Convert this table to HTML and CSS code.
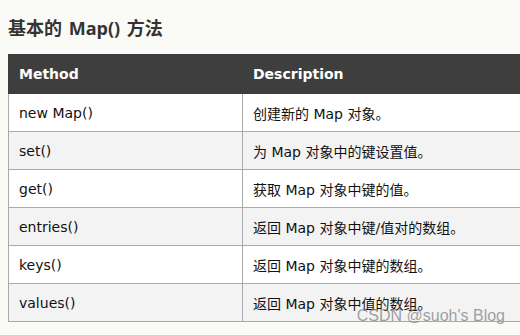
FILE: index.html
```html
<!DOCTYPE html>
<html lang="zh">
<head>
<meta charset="utf-8">
<title>基本的 Map() 方法</title>
<link rel="stylesheet" href="styles.css">
</head>
<body>
<main class="page">
  <h2 class="title">基本的 Map() 方法</h2>
  <table class="methods">
    <thead>
      <tr><th class="col-method">Method</th><th class="col-desc">Description</th></tr>
    </thead>
    <tbody>
      <tr><td>new Map()</td><td>创建新的 Map 对象。</td></tr>
      <tr><td>set()</td><td>为 Map 对象中的键设置值。</td></tr>
      <tr><td>get()</td><td>获取 Map 对象中键的值。</td></tr>
      <tr><td>entries()</td><td>返回 Map 对象中键/值对的数组。</td></tr>
      <tr><td>keys()</td><td>返回 Map 对象中键的数组。</td></tr>
      <tr><td>values()</td><td>返回 Map 对象中值的数组。</td></tr>
    </tbody>
  </table>
  <div class="watermark">CSDN @suoh's Blog</div>
</main>
</body>
</html>
```

FILE: styles.css
```css
html, body {
  margin: 0;
  padding: 0;
  background: #fafaf6;
  overflow: hidden;
}

.page {
  position: relative;
  width: 520px;
  height: 335px;
  padding: 0 0 0 8px;
  box-sizing: border-box;
  font-family: "DejaVu Sans", Verdana, "Noto Sans CJK SC", sans-serif;
  color: #111;
}

.title {
  margin: 0;
  padding-top: 16px;
  height: 54px;
  box-sizing: border-box;
  font-family: "Open Sans", "Noto Sans CJK SC", sans-serif;
  font-size: 18px;
  line-height: 24px;
  font-weight: bold;
  word-spacing: 2px;
  color: #333;
}

.methods {
  width: 512px;
  border-collapse: collapse;
  font-size: 14px;
}

.methods th {
  background: #3e3e3e;
  color: #fff;
  font-weight: bold;
  text-align: left;
  height: 38px;
  padding: 0 10px;
  border: 1px solid #3e3e3e;
}

.methods .col-method {
  width: 213px;
}

.methods td {
  height: 37px;
  padding: 0 10px;
  border: 1px solid #aaa;
  background: #fff;
}

.methods td:last-child,
.methods th:last-child {
  border-right: none;
}

.methods tbody tr:nth-child(even) td {
  background: #f3f3f3;
}

.watermark {
  position: absolute;
  right: 15px;
  bottom: 13px;
  font-family: "Liberation Sans", Arial, sans-serif;
  font-size: 16px;
  line-height: 12px;
  color: rgba(120, 120, 120, 0.7);
}
```
